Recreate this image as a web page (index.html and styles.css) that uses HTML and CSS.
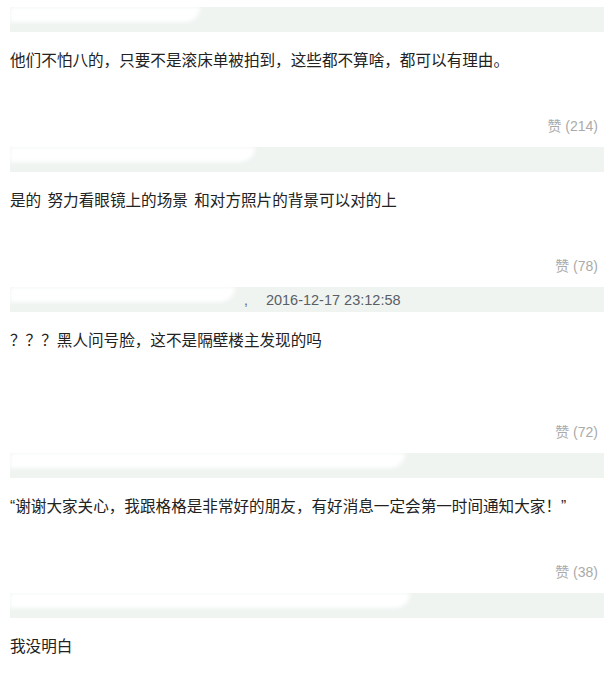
FILE: index.html
```html
<!DOCTYPE html>
<html lang="zh-CN">
<head>
    <meta charset="UTF-8">
    <meta name="viewport" content="width=device-width, initial-scale=1.0">
    <title>评论</title>
    <link rel="stylesheet" href="styles.css">
</head>
<body>
    <div class="comments">
        <div class="comment">
            <div class="comment-head">
                <span class="name name-1"></span>
            </div>
            <div class="comment-body">他们不怕八的，只要不是滚床单被拍到，这些都不算啥，都可以有理由。</div>
            <div class="comment-foot">赞 (214)</div>
        </div>
        <div class="comment">
            <div class="comment-head">
                <span class="name name-2"></span>
            </div>
            <div class="comment-body">是的 努力看眼镜上的场景 和对方照片的背景可以对的上</div>
            <div class="comment-foot">赞 (78)</div>
        </div>
        <div class="comment">
            <div class="comment-head">
                <span class="name name-3"></span>
                <span class="sep">,</span>
                <span class="time">2016-12-17 23:12:58</span>
            </div>
            <div class="comment-body tall">？？？黑人问号脸，这不是隔壁楼主发现的吗</div>
            <div class="comment-foot">赞 (72)</div>
        </div>
        <div class="comment">
            <div class="comment-head">
                <span class="name name-4"></span>
            </div>
            <div class="comment-body">“谢谢大家关心，我跟格格是非常好的朋友，有好消息一定会第一时间通知大家！”</div>
            <div class="comment-foot">赞 (38)</div>
        </div>
        <div class="comment">
            <div class="comment-head">
                <span class="name name-5"></span>
            </div>
            <div class="comment-body">我没明白</div>
        </div>
    </div>
</body>
</html>
```

FILE: styles.css
```css
* {
    margin: 0;
    padding: 0;
    box-sizing: border-box;
}
body {
    font-family: 'Liberation Sans', 'Noto Sans CJK SC', sans-serif;
    background: #fff;
    color: #222;
    overflow: hidden;
}
.comments {
    padding: 7px 0 0 10px;
}
.comment-head {
    height: 25px;
    background: #eff4f1;
    display: flex;
    align-items: center;
    overflow: hidden;
    font-size: 14px;
}
.comment-head .name {
    align-self: flex-start;
    height: 15px;
    background: #fff;
    border-radius: 0 0 20px 0;
    filter: blur(2px);
}
.name-1 { width: 190px; }
.name-2 { width: 245px; height: 18px; }
.name-3 { width: 225px; height: 25px; }
.name-4 { width: 395px; height: 16px; }
.name-5 { width: 400px; height: 12px; }
.comment-head .sep {
    color: #666;
    margin: 0 0 0 9px;
}
.comment-head .time {
    color: #5a5e66;
    font-size: 14.5px;
    margin-left: 18px;
}
.comment-body {
    padding-top: 19px;
    font-size: 15.6px;
    line-height: 20px;
    word-spacing: 2px;
    text-spacing-trim: space-all;
    color: #222;
}
.comment-body.tall {
    padding-bottom: 26px;
}
.comment-foot {
    margin-top: 45px;
    margin-bottom: 11px;
    text-align: right;
    padding-right: 6px;
    font-size: 14px;
    line-height: 20px;
    color: #aaa;
}
```
